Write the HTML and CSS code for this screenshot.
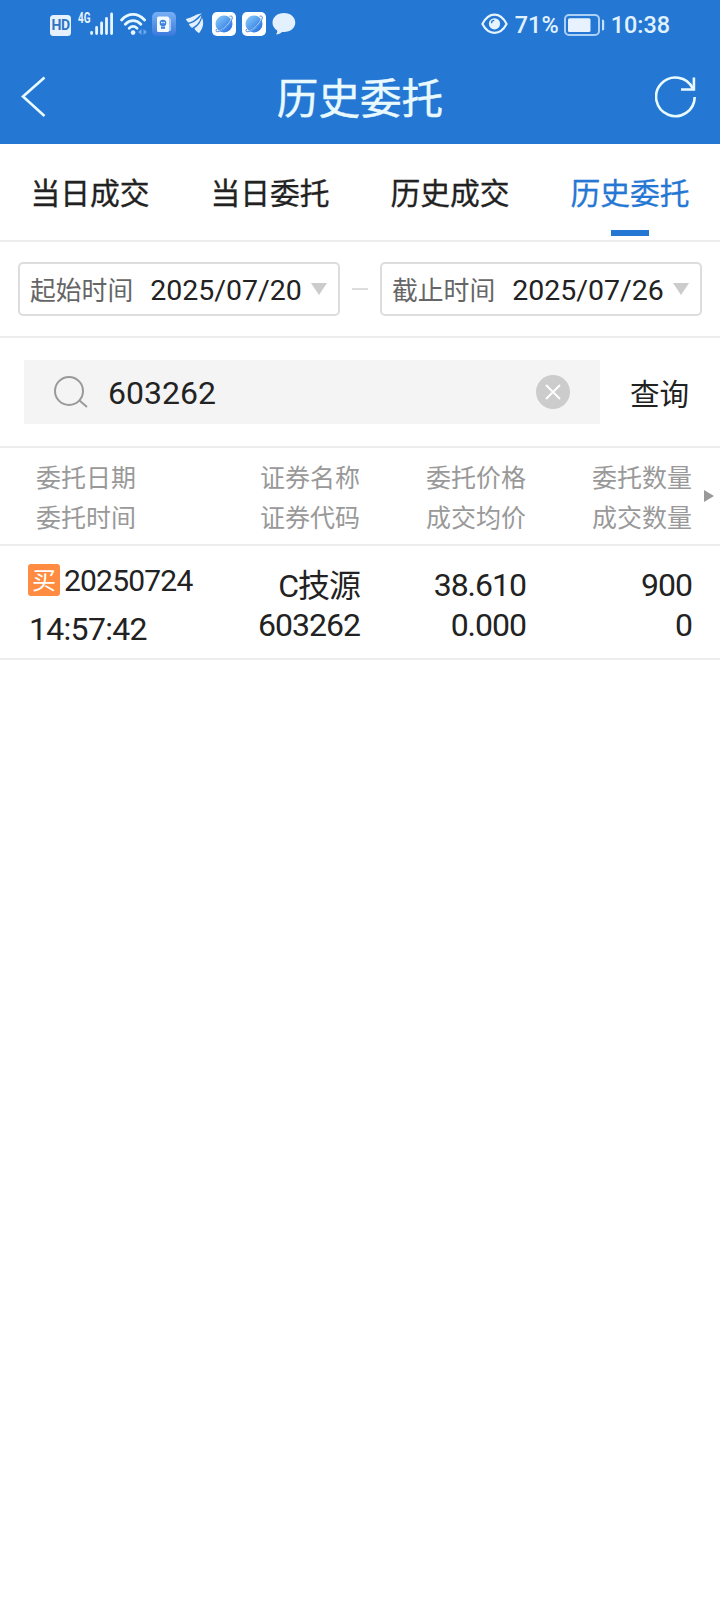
FILE: index.html
```
<!DOCTYPE html>
<html lang="zh-CN">
<head>
  <meta charset="utf-8">
  <meta name="viewport" content="width=device-width">
  <title>历史委托</title>
  <link rel="stylesheet" href="styles.css">
</head>
<body>

  <header class="header">
    <div class="statusbar">
      <div class="status-left">
        <span class="icon-hd">HD</span>
        <svg class="icon-signal" width="36" height="28" viewBox="0 -2 36 28">
          <text x="0" y="11" textLength="12.5" lengthAdjust="spacingAndGlyphs" class="net-text">4G</text>
          <path d="M13.6 21.5v-1M18.6 21.5v-6M23.6 21.5v-10.500M28.500 21.500v-15M33.600 21.500v-19.500" stroke="#e6f4ff" stroke-width="2.800" stroke-linecap="round"/>
        </svg>
        <svg class="icon-wifi" width="28" height="24" viewBox="0 0 28 24">
          <g fill="none" stroke="#e6f8ff" stroke-width="2.800" stroke-linecap="round">
            <path d="M1.600 8C8.500 .600 17.500 .600 24.600 8"/>
            <path d="M5.300 12.200C10 7.400 16.200 7.400 20.900 12.200"/>
            <path d="M9.200 16.200C11.700 13.900 14.500 13.900 17 16.200"/>
          </g>
          <circle cx="13.100" cy="20.600" r="2.300" fill="#e6f8ff"/>
          <path d="M21.500 17v6l-3.500-3zM23.500 17v6l3.500-3z" fill="#6fa9ec"/>
        </svg>
        <svg class="icon-card" width="24" height="24" viewBox="0 0 24 24">
          <defs>
            <linearGradient id="card" x1="0" y1="0" x2="0" y2="1">
              <stop offset="0" stop-color="#78b0f4"/>
              <stop offset="1" stop-color="#3b78dc"/>
            </linearGradient>
          </defs>
          <rect width="24" height="24" rx="5" fill="url(#card)"/>
          <rect x="9" y="6" width="10" height="13" rx="1.500" fill="#a8caf6"/>
          <rect x="5" y="4.500" width="12" height="15.500" rx="1.500" fill="#f3f9ff"/>
          <circle cx="11" cy="11" r="3.300" fill="#3f83dc"/>
          <circle cx="9.900" cy="10.600" r=".8" fill="#fff"/>
          <circle cx="12.100" cy="10.600" r=".8" fill="#fff"/>
          <path d="M9 14.500h4v2.300H9z" fill="#3f83dc"/>
        </svg>
        <svg class="icon-wing" width="19" height="22" viewBox="0 0 19 22" fill="#e3f0fd">
          <path d="M17 .500C11 .500 8.500 4.500 .8 6c.6 1.600 1.500 2.800 2.700 3.600C9.500 8.500 12 4 17 .5z"/>
          <path d="M16.500 2.300C13.500 6 10.500 9.300 3.800 11c.8 1.700 1.800 2.900 3.200 3.900C12.500 12.500 15.500 7.500 16.500 2.300z"/>
          <path d="M17 4.800C16 9 13.500 13 9.300 15.600c1 1.700 2.400 3.300 4.700 4.600C18 15.500 19.300 10 17 4.800z"/>
        </svg>
        <svg class="icon-browser" width="24" height="24" viewBox="0 0 24 24">
          <defs>
            <linearGradient id="globe" x1="0" y1="0" x2="1" y2="1">
              <stop offset="0" stop-color="#8ed0fb"/>
              <stop offset="1" stop-color="#1b68df"/>
            </linearGradient>
          </defs>
          <rect width="24" height="24" rx="5" fill="#fff"/>
          <circle cx="12" cy="12" r="8.500" fill="url(#globe)"/>
          <path d="M6 19.500C12 18 18.500 11.500 19.700 5.500" fill="none" stroke="#b9dcfb" stroke-width="1.200"/>
          <path d="M4.500 17C3 20.500 5.500 20.500 9.500 18.300C15 15 19 10 20.300 6.500C20.800 4.300 19.500 3.500 17.500 4.300" fill="none" stroke="#4f8fe4" stroke-width="1"/>
        </svg>
        <svg class="icon-browser" width="24" height="24" viewBox="0 0 24 24">
          <rect width="24" height="24" rx="5" fill="#fff"/>
          <circle cx="12" cy="12" r="8.500" fill="url(#globe)"/>
          <path d="M6 19.500C12 18 18.500 11.500 19.700 5.500" fill="none" stroke="#b9dcfb" stroke-width="1.200"/>
          <path d="M4.500 17C3 20.500 5.500 20.500 9.500 18.300C15 15 19 10 20.300 6.500C20.800 4.300 19.500 3.500 17.500 4.300" fill="none" stroke="#4f8fe4" stroke-width="1"/>
        </svg>
        <svg class="icon-chat" width="24" height="22" viewBox="0 0 24 22">
          <path d="M12 0C5.500 0 .5 4.200.5 9.600c0 3.400 1.800 6.200 4.700 7.900.2 1.500-.2 2.700-1.200 4 2.600-.2 4.600-1.100 6-2.500.7.100 1.300.1 2 .1 6.500 0 11.300-4.100 11.300-9.500S18.500 0 12 0z" fill="#e3f0fd"/>
        </svg>
      </div>
      <div class="status-right">
        <svg class="icon-eye" width="27" height="22" viewBox="0 0 27 22">
          <path d="M1.400 11C4.500 5 8.500 1.700 13.500 1.700S22.500 5 25.600 11C22.500 16.800 18.500 19.800 13.500 19.800S4.500 16.800 1.400 11z" fill="none" stroke="#e6f4ff" stroke-width="2.200" stroke-linejoin="round"/>
          <circle cx="13.500" cy="10.800" r="5.600" fill="#e6f4ff"/>
          <path d="M10.500 10.200a2.800 2.800 0 0 1 2.800-2.800" fill="none" stroke="#2577d4" stroke-width="1.300"/>
        </svg>
        <span class="percent">71%</span>
        <svg class="icon-battery" width="41" height="22" viewBox="0 0 41 22">
          <rect x="1" y="1" width="34" height="20" rx="4" fill="none" stroke="#acd0f6" stroke-width="2"/>
          <rect x="4" y="4.300" width="22.500" height="13.700" rx="1.500" fill="#e8f2ff"/>
          <path d="M38 5.500c2.200 0 2.200 1 2.200 2v7c0 1 0 2-2.200 2z" fill="#c5e2ff"/>
        </svg>
        <span class="clock">10:38</span>
      </div>
    </div>
    <div class="navbar">
      <svg class="icon-back" width="26" height="42" viewBox="0 0 26 42">
        <path d="M23.500 1.500L2 20.500L23.500 40" fill="none" stroke="#e9faff" stroke-width="2.600"/>
      </svg>
      <h1 class="title">历史委托</h1>
      <svg class="icon-refresh" width="42" height="42" viewBox="0 0 42 42" fill="none" stroke="#e9faff" stroke-width="2.600">
        <path d="M39.700 21A19.300 19.300 0 1 1 37.800 12.500"/>
        <path d="M38.900 1.500V13.500H26"/>
      </svg>
    </div>
  </header>

  <nav class="tabs">
    <a class="tab">当日成交</a>
    <a class="tab">当日委托</a>
    <a class="tab">历史成交</a>
    <a class="tab active">历史委托</a>
  </nav>

  <div class="dates">
    <div class="datebox">
      <span class="label">起始时间</span>
      <span class="date">2025/07/20</span>
      <i class="caret"></i>
    </div>
    <i class="dash"></i>
    <div class="datebox">
      <span class="label">截止时间</span>
      <span class="date">2025/07/26</span>
      <i class="caret"></i>
    </div>
  </div>

  <div class="search">
    <div class="searchbox">
      <svg width="34" height="34" viewBox="0 0 34 34" fill="none" stroke="#999" stroke-width="2">
        <circle cx="15" cy="16" r="14"/>
        <path d="M25.500 25.500L33 32"/>
      </svg>
      <span class="keyword">603262</span>
      <svg class="clear" width="34" height="34" viewBox="0 0 34 34">
        <circle cx="17" cy="17" r="17" fill="#ccc"/>
        <path d="M10 10L24 24M24 10L10 24" stroke="#fff" stroke-width="1.800"/>
      </svg>
    </div>
    <a class="query">查询</a>
  </div>

  <div class="row head">
    <div class="cell">委托日期<br>委托时间</div>
    <div class="cell">证券名称<br>证券代码</div>
    <div class="cell">委托价格<br>成交均价</div>
    <div class="cell">委托数量<br>成交数量</div>
    <i class="more"></i>
  </div>

  <div class="row order">
    <div class="cell when">
      <div class="day"><span class="badge">买</span>20250724</div>
      <div class="time">14:57:42</div>
    </div>
    <div class="cell"><span class="name">C技源</span><br>603262</div>
    <div class="cell">38.610<br>0.000</div>
    <div class="cell">900<br>0</div>
  </div>

</body>
</html>
```
FILE: styles.css
```
* {
  box-sizing: border-box;
}

html, body {
  margin: 0;
  padding: 0;
  background: #fff;
  color: #222;
  font-family: Roboto, "Noto Sans CJK SC", sans-serif;
}

svg {
  display: block;
  flex: none;
}

/* header */

.header {
  height: 144px;
  background: #2577d4;
  color: #e9faff;
}

.statusbar {
  display: flex;
  justify-content: space-between;
  height: 48px;
  padding: 0 50px;
}

.status-left,
.status-right {
  display: flex;
  align-items: center;
}

.status-right {
  font-size: 23.4px;
  font-weight: 500;
  line-height: 46px;
  color: #e0f2ff;
}

.status-right span {
  padding-top: 2px;
}

.net-text {
  font: bold 14px Roboto, sans-serif;
  fill: #e6f4ff;
}

.icon-hd {
  width: 21px;
  height: 21px;
  margin-top: 2px;
  border-radius: 3.5px;
  background: #e6f1fd;
  color: #2f74c4;
  font-size: 14px;
  font-weight: 700;
  line-height: 21px;
  letter-spacing: -0.5px;
  text-align: center;
}

.icon-signal { margin-left: 7px; }
.icon-wifi { margin-left: 6px; }
.icon-card { margin-left: 4px; }
.icon-wing { margin-left: 9px; }
.icon-browser { margin-left: 8px; }
.icon-browser + .icon-browser { margin-left: 6px; }
.icon-chat { margin-left: 6px; }
.percent { margin-left: 7px; }
.icon-battery { margin: 1px 0 0 5px; }
.clock { margin-left: 6px; }

.navbar {
  display: flex;
  align-items: center;
  justify-content: space-between;
  height: 96px;
  padding: 2px 23px 0 21px;
}

.icon-back {
  margin-right: 16px;
}

.title {
  margin: 0;
  padding: 6px 0 0 2px;
  font-size: 41.6px;
  font-weight: 400;
  line-height: 88px;
  -webkit-text-stroke: 0.4px;
}

/* tabs */

.tabs {
  display: flex;
  height: 98px;
  border-bottom: 2px solid #ededed;
}

.tab {
  display: flex;
  flex-direction: column;
  align-items: center;
  flex: 1;
  font-size: 29.8px;
  line-height: 100px;
  -webkit-text-stroke: 0.3px;
}

.tab.active {
  color: #2577d4;
}

.tab.active::after {
  content: "";
  width: 38px;
  height: 6px;
  margin-top: -14px;
  background: #2577d4;
}

/* date range */

.dates {
  display: flex;
  align-items: center;
  justify-content: space-between;
  height: 96px;
  padding: 0 18px;
  border-bottom: 2px solid #ededed;
}

.datebox {
  display: flex;
  align-items: center;
  width: 322px;
  height: 54px;
  padding-left: 10px;
  border: 2px solid #ddd;
  border-radius: 5px;
  line-height: 50px;
}

.label {
  padding-top: 4px;
  font-size: 25.8px;
  line-height: 46px;
  color: #666;
}

.date {
  padding-top: 4px;
  margin-left: 17px;
  font-size: 28.5px;
  line-height: 46px;
}

.caret {
  margin: 0 0 0 9px;
  border: 8px solid transparent;
  border-top: 12px solid #ccc;
  border-bottom: 0;
}

.dash {
  width: 16px;
  height: 2px;
  background: #ddd;
}

/* search */

.search {
  display: flex;
  align-items: center;
  height: 110px;
  padding-left: 24px;
  border-bottom: 2px solid #ededed;
}

.searchbox {
  display: flex;
  align-items: center;
  width: 576px;
  height: 64px;
  padding: 0 30px;
  background: #f4f4f4;
}

.keyword {
  padding-top: 2px;
  margin-left: 20px;
  font-size: 32px;
  line-height: 62px;
}

.clear {
  margin-left: auto;
}

.query {
  flex: 1;
  padding-right: 1px;
  font-size: 29.6px;
  text-align: center;
}

/* order list */

.row {
  display: grid;
  grid-template-columns: 194px 166px 166px 166px 28px;
  border-bottom: 2px solid #ededed;
  line-height: 40px;
  text-align: right;
}

.cell:first-child {
  text-align: left;
}

.head {
  align-items: center;
  height: 98px;
  font-size: 25px;
  color: #999;
}

.head .cell {
  padding-top: 6px;
}

.head .cell:first-child {
  padding-left: 36px;
}

.more {
  margin-left: 12px;
  width: 0;
  border: 6.5px solid transparent;
  border-left: 10px solid #999;
  border-right: 0;
}

.order {
  height: 114px;
  padding-top: 19px;
  font-size: 32px;
  letter-spacing: -1px;
}

.name {
  position: relative;
  top: 1px;
}

.when {
  padding-left: 28px;
  margin-top: -1px;
}

.day {
  display: flex;
  align-items: center;
  height: 32px;
  padding-top: 1px;
  font-size: 30px;
  letter-spacing: -0.8px;
}

.badge {
  width: 32px;
  height: 32px;
  margin: -1px 4px 0 0;
  border-radius: 3px;
  background: #ff8c40;
  color: #fff;
  font-size: 24px;
  line-height: 34px;
  letter-spacing: 0;
  text-align: center;
}

.time {
  margin-top: 13px;
  padding-left: 1px;
  letter-spacing: -0.7px;
}
```
